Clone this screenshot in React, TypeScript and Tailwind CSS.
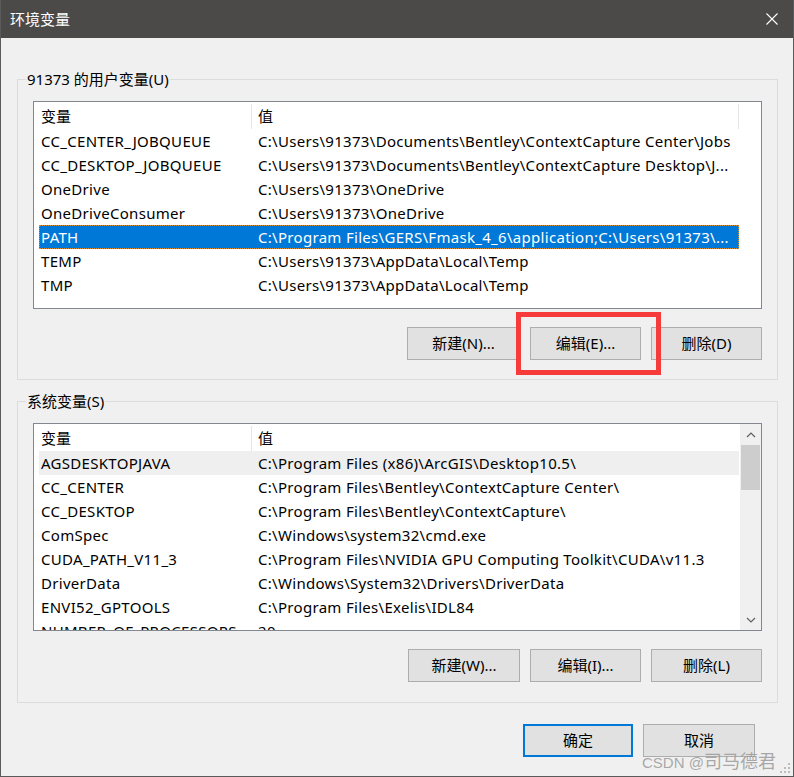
import React from "react";

const userVars: [string, string][] = [
  ["CC_CENTER_JOBQUEUE", "C:\\Users\\91373\\Documents\\Bentley\\ContextCapture Center\\Jobs"],
  ["CC_DESKTOP_JOBQUEUE", "C:\\Users\\91373\\Documents\\Bentley\\ContextCapture Desktop\\J..."],
  ["OneDrive", "C:\\Users\\91373\\OneDrive"],
  ["OneDriveConsumer", "C:\\Users\\91373\\OneDrive"],
  ["PATH", "C:\\Program Files\\GERS\\Fmask_4_6\\application;C:\\Users\\91373\\..."],
  ["TEMP", "C:\\Users\\91373\\AppData\\Local\\Temp"],
  ["TMP", "C:\\Users\\91373\\AppData\\Local\\Temp"],
];

const sysVars: [string, string][] = [
  ["AGSDESKTOPJAVA", "C:\\Program Files (x86)\\ArcGIS\\Desktop10.5\\"],
  ["CC_CENTER", "C:\\Program Files\\Bentley\\ContextCapture Center\\"],
  ["CC_DESKTOP", "C:\\Program Files\\Bentley\\ContextCapture\\"],
  ["ComSpec", "C:\\Windows\\system32\\cmd.exe"],
  ["CUDA_PATH_V11_3", "C:\\Program Files\\NVIDIA GPU Computing Toolkit\\CUDA\\v11.3"],
  ["DriverData", "C:\\Windows\\System32\\Drivers\\DriverData"],
  ["ENVI52_GPTOOLS", "C:\\Program Files\\Exelis\\IDL84"],
  ["NUMBER_OF_PROCESSORS", "20"],
];

const FONT = { fontFamily: '"Noto Sans", "Noto Sans CJK SC", sans-serif' };

function Header({ withEnd }: { withEnd: boolean }) {
  return (
    <div className="flex h-[27px] w-[700px] shrink-0 items-center pt-[1px]">
      <div className="flex h-[25px] w-[213px] items-center border-r border-[#e5e5e5] pl-[2px]">变量</div>
      <div className={`flex h-[25px] flex-1 items-center pl-[6px] ${withEnd ? "border-r border-[#e5e5e5]" : ""}`}>值</div>
    </div>
  );
}

function Row({ name, value, state }: { name: string; value: string; state?: "sel" | "hover" }) {
  const cls =
    state === "sel"
      ? "bg-[#0078d7] text-white outline outline-1 outline-dotted outline-[#d9903c] -outline-offset-1"
      : state === "hover"
      ? "bg-[#efefef]"
      : "";
  return (
    <div className={`flex h-[24px] w-[700px] shrink-0 items-center whitespace-nowrap tracking-[0.3px] ${cls}`}>
      <div className="w-[213px] overflow-hidden pl-[2px]">{name}</div>
      <div className="flex-1 overflow-hidden pl-[6px]">{value}</div>
    </div>
  );
}

function Btn({ label, className = "" }: { label: string; className?: string }) {
  return (
    <div
      className={`flex h-[33px] w-[111px] items-center justify-center border border-[#adadad] bg-[#e1e1e1] text-[15px] text-black ${className}`}
    >
      {label}
    </div>
  );
}

function GroupBox({ label, children, pb }: { label: string; children: React.ReactNode; pb: string }) {
  return (
    <div className={`relative flex flex-col border border-[#dcdcdc] pl-[15px] pr-[15px] pt-[21px] ${pb}`}>
      <span className="absolute left-[8px] top-[-11px] bg-[#f0f0f0] px-[1px] text-[15px] leading-[20px]">{label}</span>
      {children}
    </div>
  );
}

function Chevron({ up }: { up: boolean }) {
  return (
    <svg width="10" height="6" viewBox="0 0 10 6">
      <path
        d={up ? "M1 5 L5 1 L9 5" : "M1 1 L5 5 L9 1"}
        fill="none"
        stroke="#606060"
        strokeWidth="1.2"
      />
    </svg>
  );
}

export default function App() {
  return (
    <div className="relative h-[777px] w-[794px] overflow-hidden bg-[#f0f0f0] text-[15px] text-black" style={FONT}>
      <div className="flex h-full flex-col border-x border-b border-[#5a5a5a]">
        {/* title bar */}
        <div className="flex h-[38px] shrink-0 items-center justify-between bg-[#4b4a48] pl-[9px] pr-[15px] text-white">
          <span className="text-[15px]">环境变量</span>
          <svg width="12" height="12" viewBox="0 0 12 12">
            <path d="M0.5 0.5 L11.5 11.5 M11.5 0.5 L0.5 11.5" stroke="#ffffff" strokeWidth="1.1" />
          </svg>
        </div>

        {/* body */}
        <div className="flex flex-col pl-[16px] pr-[15px] pt-[41px]">
          <GroupBox label="91373 的用户变量(U)" pb="pb-[19px]">
            <div className="flex h-[208px] flex-col overflow-hidden border border-[#828790] bg-white pl-[5px]">
              <Header withEnd />
              {userVars.map(([n, v]) => (
                <Row key={n} name={n} value={v} state={n === "PATH" ? "sel" : undefined} />
              ))}
            </div>
            <div className="mt-[18px] flex justify-end gap-[10px]">
              <Btn label="新建(N)..." className="w-[113px]" />
              <div className="relative">
                <Btn label="编辑(E)..." />
                <div className="pointer-events-none absolute left-[-14px] top-[-15px] h-[63px] w-[145px] border-[5px] border-[#f73a3a]" />
              </div>
              <Btn label="删除(D)" />
            </div>
          </GroupBox>

          <div className="mt-[21px]">
            <GroupBox label="系统变量(S)" pb="pb-[20px]">
              <div className="flex h-[208px] overflow-hidden border border-[#828790] bg-white">
                <div className="flex flex-1 flex-col overflow-hidden pl-[5px]">
                  <Header withEnd={false} />
                  {sysVars.map(([n, v]) => (
                    <Row key={n} name={n} value={v} state={n === "AGSDESKTOPJAVA" ? "hover" : undefined} />
                  ))}
                </div>
                <div className="flex w-[21px] shrink-0 flex-col bg-[#f0f0f0]">
                  <div className="flex h-[21px] items-center justify-center">
                    <Chevron up />
                  </div>
                  <div className="mx-[1px] h-[45px] bg-[#cdcdcd]" />
                  <div className="flex-1" />
                  <div className="flex h-[21px] items-center justify-center">
                    <Chevron up={false} />
                  </div>
                </div>
              </div>
              <div className="mt-[18px] flex justify-end gap-[10px]">
                <Btn label="新建(W)..." className="w-[112px]" />
                <Btn label="编辑(I)..." />
                <Btn label="删除(L)" />
              </div>
            </GroupBox>
          </div>

          <div className="mt-[21px] flex justify-end gap-[10px] pr-[23px]">
            <div className="flex h-[33px] w-[110px] items-center justify-center border-2 border-[#0078d7] bg-[#e1e1e1]">
              确定
            </div>
            <Btn label="取消" className="w-[112px]" />
          </div>
        </div>
      </div>

      {/* watermark */}
      <div className="pointer-events-none absolute left-[642px] top-[747px] flex items-baseline whitespace-nowrap leading-[26px] text-[#9a9a9a]/85">
        <span className="text-[15px]" style={{ fontFamily: '"Liberation Sans", sans-serif' }}>
          CSDN @
        </span>
        <span className="text-[18px]" style={{ fontFamily: '"Noto Sans CJK SC", sans-serif' }}>
          司马德君
        </span>
      </div>
      {/* resize grip */}
      <svg className="absolute bottom-[4px] right-[4px]" width="10" height="10" viewBox="0 0 10 10">
        <g fill="#bdbdbd">
          <rect x="8" y="0" width="2" height="2" />
          <rect x="4" y="4" width="2" height="2" />
          <rect x="8" y="4" width="2" height="2" />
          <rect x="0" y="8" width="2" height="2" />
          <rect x="4" y="8" width="2" height="2" />
          <rect x="8" y="8" width="2" height="2" />
        </g>
      </svg>
    </div>
  );
}
